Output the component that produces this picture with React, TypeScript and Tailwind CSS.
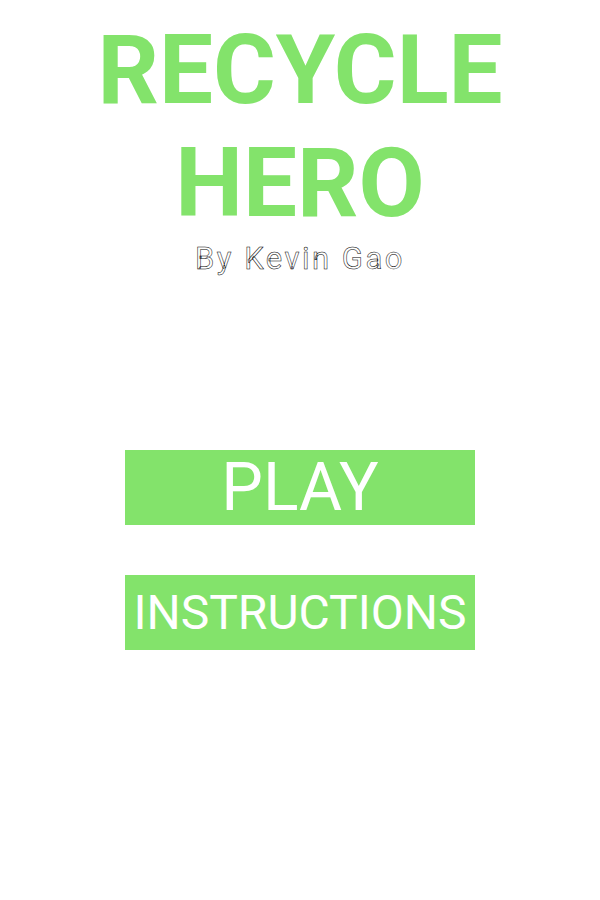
export default function App() {
  return (
    <div className="min-h-[900px] w-full bg-white flex flex-col items-center font-['Roboto',sans-serif]">
      <h1 className="pt-[14px] text-center text-[96px] leading-[113px] font-bold text-[#83e36b]">
        RECYCLE
        <br />
        HERO
      </h1>
      <p className="text-[31px] font-normal text-white [-webkit-text-stroke:0.5px_#000] tracking-[2.5px] leading-[38px]">
        By Kevin Gao
      </p>

      <div className="mt-[172px] flex flex-col gap-[50px]">
        <button className="w-[350px] h-[75px] bg-[#83e36b] text-white text-[66px] flex items-center justify-center">
          PLAY
        </button>
        <button className="w-[350px] h-[75px] bg-[#83e36b] text-white text-[48px] flex items-center justify-center">
          INSTRUCTIONS
        </button>
      </div>
    </div>
  );
}
